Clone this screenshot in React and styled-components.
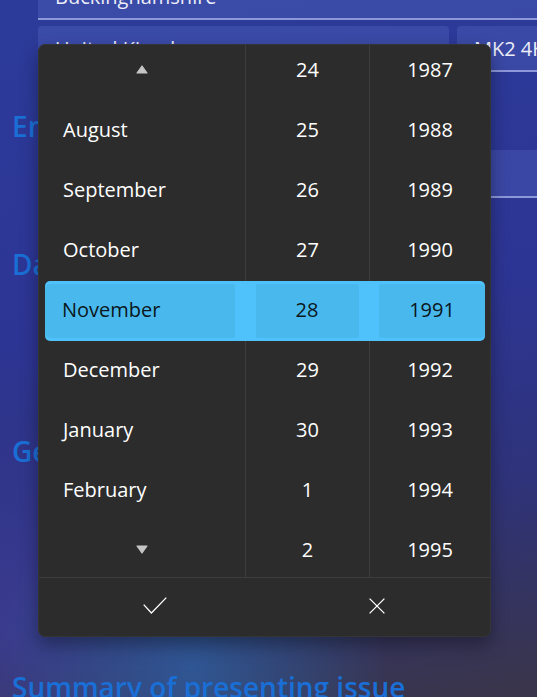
import React from 'react'
import styled, { createGlobalStyle } from 'styled-components'

const GlobalStyle = createGlobalStyle`
  html, body {
    margin: 0;
    padding: 0;
  }
  body {
    font-family: "Segoe UI", "Open Sans", sans-serif;
    overflow: hidden;
  }
`;

const Page = styled.div`
  position: relative;
  width: 537px;
  height: 697px;
  overflow: hidden;
  background:
    radial-gradient(circle at 36% 96%, rgba(44, 100, 170, 0.7) 0%, rgba(44, 100, 170, 0) 26%),
    radial-gradient(circle at 0% 90%, rgba(66, 66, 180, 0.5) 0%, rgba(66, 66, 180, 0) 26%),
    linear-gradient(172deg, #2c3b9a 0%, #2d3594 45%, #2f3379 72%, #3a3549 100%);
`;

const Form = styled.div`
  width: 640px;
  margin-top: -26px;
  padding-left: 12px;
  display: flex;
  flex-direction: column;
`;

const FieldRow = styled.div`
  display: flex;
  gap: 8px;
  margin-left: 26px;
  margin-top: ${p => p.$top || 0}px;
`;

const Field = styled.div`
  box-sizing: border-box;
  height: ${p => p.$h || 46}px;
  width: ${p => p.$w}px;
  flex: ${p => (p.$w ? 'none' : '1')};
  background: rgba(110, 130, 220, 0.22);
  border-radius: 4px 4px 0 0;
  border-bottom: 2px solid #8c98d8;
  color: #eceef8;
  font-size: 20px;
  display: flex;
  align-items: center;
  padding-left: 17px;
`;

const Heading = styled.h2`
  margin: ${p => p.$top || 0}px 0 0 0;
  font-size: 28px;
  line-height: 36px;
  font-weight: 600;
  color: #1a6fd6;
`;

const DateButton = styled.div`
  box-sizing: border-box;
  margin: 58px 0 0 26px;
  width: 300px;
  height: 38px;
  border: 1px solid #9a9ec8;
  border-radius: 5px;
`;

const RadioList = styled.div`
  display: flex;
  flex-direction: column;
  gap: 31px;
  margin: 18px 0 0 26px;
`;

const Radio = styled.div`
  box-sizing: border-box;
  width: 20px;
  height: 20px;
  border-radius: 50%;
  border: ${p => (p.$on ? '5px solid #4cc2ff' : '1px solid #a4a8cc')};
`;

const Flyout = styled.div`
  position: absolute;
  left: 38px;
  top: 44px;
  width: 453px;
  height: 593px;
  box-sizing: border-box;
  background: #2c2c2c;
  border: 1px solid #353535;
  border-radius: 7px;
  box-shadow: 0 8px 18px rgba(0, 0, 0, 0.35);
  display: flex;
  flex-direction: column;
  overflow: hidden;
`;

const Lists = styled.div`
  position: relative;
  height: 532px;
  display: grid;
  grid-template-columns: 206px 124px 1fr;
`;

const Column = styled.div`
  display: flex;
  flex-direction: column;
  justify-content: center;
  overflow: hidden;
  border-left: ${p => (p.$first ? 'none' : '1px solid #3d3d3d')};
`;

const Item = styled.div`
  flex: none;
  box-sizing: border-box;
  height: 60px;
  display: flex;
  align-items: center;
  justify-content: ${p => (p.$left ? 'flex-start' : 'center')};
  padding: 0 0 4px ${p => (p.$left ? '24px' : '0')};
  font-size: 20px;
  color: #ffffff;
`;

const Highlight = styled.div`
  position: absolute;
  left: 6px;
  right: 5px;
  top: 236px;
  height: 60px;
  box-sizing: border-box;
  padding: 3px 0;
  background: #4fc2fc;
  border-radius: 5px;
  display: grid;
  grid-template-columns: 190px 103px 106px;
  justify-content: space-between;
`;

const Cell = styled.div`
  background: #49b9ed;
  border-radius: ${p => p.$radius || '2px'};
  display: flex;
  align-items: center;
  justify-content: ${p => (p.$left ? 'flex-start' : 'center')};
  padding: 0 0 4px ${p => (p.$left ? '17px' : '0')};
  font-size: 20px;
  color: #0b1620;
`;

const Footer = styled.div`
  flex: 1;
  border-top: 1px solid #3d3d3d;
  display: grid;
  grid-template-columns: 1fr 1fr;
`;

const FooterButton = styled.div`
  display: flex;
  align-items: center;
  justify-content: center;
  padding-bottom: 3px;
  padding-left: ${p => p.$shift || 0}px;
`;

const Arrow = ({ down }) => (
  <svg width="12" height="9" viewBox="0 0 12 9" style={down ? { transform: 'rotate(180deg)' } : undefined}>
    <path d="M6 1 L11 8 L1 8 Z" fill="#c6c6c6" stroke="#c6c6c6" strokeWidth="1.2" strokeLinejoin="round" />
  </svg>
);

// index 4 is the selected row, drawn by the highlight bar instead
const months = ['up', 'August', 'September', 'October', '', 'December', 'January', 'February', 'down'];
const days = ['24', '25', '26', '27', '', '29', '30', '1', '2'];
const years = ['1987', '1988', '1989', '1990', '', '1992', '1993', '1994', '1995'];

export default function App() {
  return (
    <Page>
      <GlobalStyle />
      <Form>
        <FieldRow>
          <Field>Buckinghamshire</Field>
        </FieldRow>
        <FieldRow $top={6}>
          <Field $w={411}>United Kingdom</Field>
          <Field $w={180}>MK2 4HX</Field>
        </FieldRow>
        <Heading $top={36}>Email</Heading>
        <FieldRow $top={6}>
          <Field $h={48} />
        </FieldRow>
        <Heading $top={48}>Date of birth</Heading>
        <DateButton />
        <Heading $top={55}>Gender</Heading>
        <RadioList>
          <Radio $on />
          <Radio />
          <Radio />
        </RadioList>
        <Heading $top={60}>Summary of presenting issue</Heading>
      </Form>

      <Flyout>
        <Lists>
          <Column $first>
            {months.map((m, i) => (
              <Item key={i} $left={m !== 'up' && m !== 'down'}>
                {m === 'up' ? <Arrow /> : m === 'down' ? <Arrow down /> : m}
              </Item>
            ))}
          </Column>
          <Column>
            {days.map((d, i) => (
              <Item key={i}>{d}</Item>
            ))}
          </Column>
          <Column>
            {years.map((y, i) => (
              <Item key={i}>{y}</Item>
            ))}
          </Column>
          <Highlight>
            <Cell $left $radius="5px 2px 2px 5px">November</Cell>
            <Cell>28</Cell>
            <Cell $radius="2px 5px 5px 2px">1991</Cell>
          </Highlight>
        </Lists>
        <Footer>
          <FooterButton $shift={6}>
            <svg width="24" height="17" viewBox="0 0 24 17">
              <polyline points="0.7,7.6 8.4,16 23.3,0.6" fill="none" stroke="#ffffff" strokeWidth="1.3" />
            </svg>
          </FooterButton>
          <FooterButton>
            <svg width="16" height="16" viewBox="0 0 16 16">
              <path d="M0.6 0.6 L15.4 15.4 M15.4 0.6 L0.6 15.4" stroke="#ffffff" strokeWidth="1.3" />
            </svg>
          </FooterButton>
        </Footer>
      </Flyout>
    </Page>
  )
}
